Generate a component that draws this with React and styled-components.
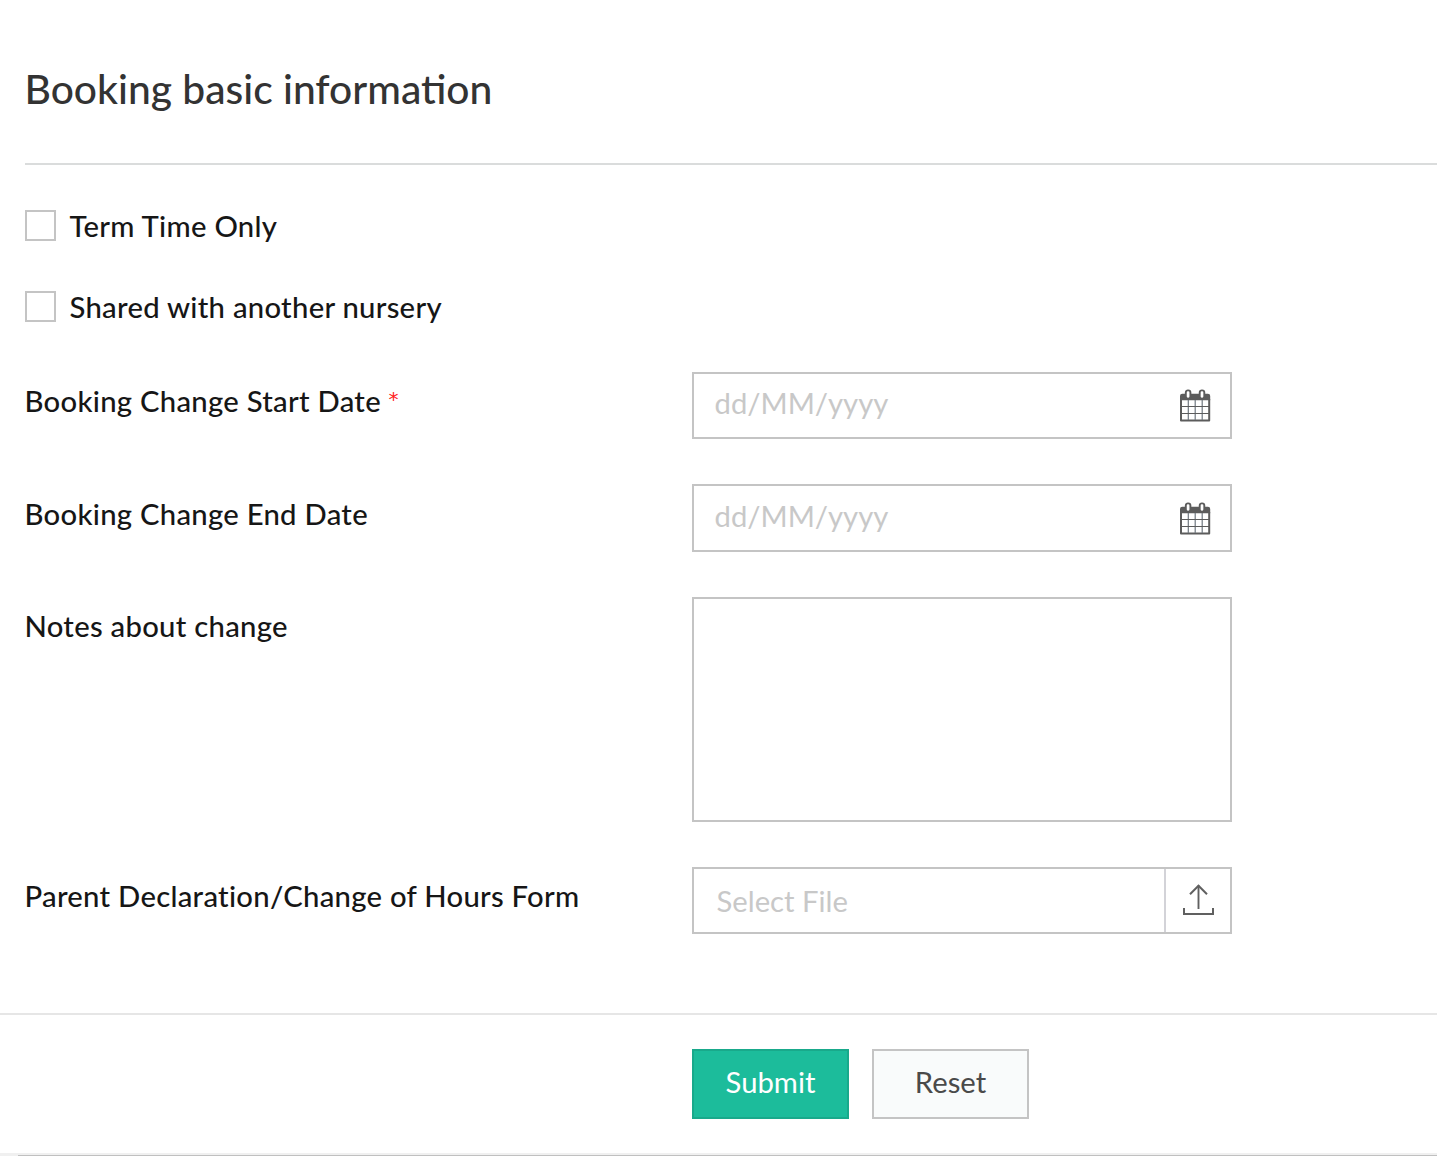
import React from "react";
import styled, { createGlobalStyle } from "styled-components";

const GlobalStyle = createGlobalStyle`
  * { box-sizing: border-box; }
  body {
    margin: 0;
    background: #fff;
    font-family: Lato, "Open Sans", sans-serif;
    overflow: hidden;
  }
`;

const Page = styled.main`
  height: 1156px;
  display: flex;
  flex-direction: column;
  overflow: hidden;
`;

const Header = styled.header`
  margin-left: 25px;
  height: 165px;
  padding-top: 64px;
  border-bottom: 2px solid #dadcdc;
`;

const Title = styled.h1`
  margin: 0 0 0 -0.5px;
  font-size: 40.75px;
  line-height: 50px;
  font-weight: 500;
  color: #333;
  white-space: nowrap;
`;

const Fields = styled.div`
  padding: 45px 0 0 25px;
  height: 848px;
`;

const CheckRow = styled.label`
  display: flex;
  align-items: flex-start;
  height: 31px;
  margin-bottom: 50px;
  gap: 14px;
`;

const CheckBox = styled.input`
  appearance: none;
  flex: none;
  width: 31px;
  height: 31px;
  margin: 0;
  border: 2px solid #c4c4c4;
  background: #fff;
`;

const LabelText = styled.span`
  margin-left: -0.5px;
  font-size: 29.25px;
  font-weight: 500;
  line-height: 32px;
  letter-spacing: 0.28px;
  color: #161616;
  white-space: nowrap;
`;

const Row = styled.div`
  display: grid;
  grid-template-columns: 667px 540px;
  align-items: start;
  height: ${(p) => p.$height}px;
  margin-bottom: ${(p) => p.$gap}px;
`;

const RowLabel = styled(LabelText)`
  padding-top: ${(p) => p.$top || 13}px;
`;

const Required = styled.span`
  font-family: "DejaVu Sans", sans-serif;
  font-weight: 400;
  font-size: 20px;
  line-height: 1;
  vertical-align: 6px;
  color: #f22;
`;

const Control = styled.div`
  display: flex;
  height: 100%;
  border: 2px solid #c4c4c4;
  background: #fff;
`;

const TextInput = styled.input`
  flex: 1;
  min-width: 0;
  height: 60px;
  border: 0;
  outline: 0;
  padding: 0 0 0 ${(p) => p.$indent}px;
  margin-top: ${(p) => p.$shift}px;
  background: transparent;
  font: 400 29.25px Lato, "Open Sans", sans-serif;
  &::placeholder { color: #c8c8c8; opacity: 1; }
`;

const IconSlot = styled.span`
  display: flex;
  flex: none;
  padding: ${(p) => p.$top}px 19px 0 0;
`;

const UploadSlot = styled.span`
  display: flex;
  flex: none;
  width: 66px;
  padding: 15px 0 0 16px;
  border-left: 2px solid #d3d3d8;
`;

const Notes = styled.textarea`
  width: 540px;
  height: 225px;
  border: 2px solid #c4c4c4;
  background: #fff;
  resize: none;
  outline: 0;
  font: 400 29.25px Lato, sans-serif;
`;

const Footer = styled.footer`
  display: flex;
  gap: 23px;
  height: 140px;
  padding: 34px 0 0 692px;
  border-top: 2px solid #e6e6e6;
`;

const Button = styled.button`
  width: 157px;
  height: 70px;
  padding: 0 0 5px;
  border: 2px solid ${(p) => (p.$primary ? "#19a98b" : "#c4c4c4")};
  background: ${(p) => (p.$primary ? "#1cbc9b" : "#f9fbfb")};
  color: ${(p) => (p.$primary ? "#fff" : "#4a4a4a")};
  font: 400 29.25px Lato, "Open Sans", sans-serif;
`;

const Edge = styled.div`
  height: 3px;
  padding: 2px 0 0 18px;
  background: #f0f0f0;
`;

const EdgeLine = styled.div`
  height: 1px;
  background: #c0c0c0;
`;

const CalendarIcon = () => (
  <svg width="32" height="34" viewBox="0 0 32 34" fill="none">
    <path d="M1 11.2V7Q1 4.8 3.3 4.8H28.9Q31.2 4.8 31.2 7V11.2Z" fill="#5c5c5c" />
    <path d="M2 10V31.5H30.2V10" stroke="#5c5c5c" strokeWidth="2" strokeLinejoin="round" />
    <path d="M9.3 11V31M16.2 11V31M23.2 11V31" stroke="#707880" strokeWidth="1.2" />
    <path d="M2 17.5H30M2 24.5H30" stroke="#5c5c5c" strokeWidth="1.2" />
    <rect x="6.8" y="1.4" width="4.6" height="8.2" rx="2.1" fill="#fff" stroke="#5c5c5c" strokeWidth="1.9" />
    <rect x="20.7" y="1.4" width="4.6" height="8.2" rx="2.1" fill="#fff" stroke="#5c5c5c" strokeWidth="1.9" />
  </svg>
);

const UploadIcon = () => (
  <svg width="32" height="32" viewBox="0 0 32 32" fill="none" stroke="#606060">
    <path d="M16.5 25V1.5" strokeWidth="1.9" />
    <path d="M8 10.2L16.5 1.7L25 10.2" strokeWidth="2" />
    <path d="M2 24V30H31V24" strokeWidth="2" />
  </svg>
);

const Check = ({ children }) => (
  <CheckRow>
    <CheckBox type="checkbox" />
    <LabelText>{children}</LabelText>
  </CheckRow>
);

const DateRow = ({ label, required, height, gap, labelTop, shift, iconTop }) => (
  <Row $height={height} $gap={gap}>
    <RowLabel $top={labelTop}>
      {label}
      {required && <> <Required>*</Required></>}
    </RowLabel>
    <Control>
      <TextInput placeholder="dd/MM/yyyy" $indent={20.5} $shift={shift} />
      <IconSlot $top={iconTop}><CalendarIcon /></IconSlot>
    </Control>
  </Row>
);

export default function App() {
  return (
    <>
      <GlobalStyle />
      <Page>
        <Header>
          <Title>Booking basic information</Title>
        </Header>
        <Fields>
          <Check>Term Time Only</Check>
          <Check>Shared with another nursery</Check>
          <DateRow label="Booking Change Start Date" required height={67} gap={45} labelTop={13} shift={-2} iconTop={15} />
          <DateRow label="Booking Change End Date" height={68} gap={45} labelTop={14} shift={-1} iconTop={16} />
          <Row $height={225} $gap={45}>
            <RowLabel>Notes about change</RowLabel>
            <Notes />
          </Row>
          <Row $height={67} $gap={0}>
            <RowLabel>Parent Declaration/Change of Hours Form</RowLabel>
            <Control>
              <TextInput placeholder="Select File" $indent={22.5} $shift={1} />
              <UploadSlot><UploadIcon /></UploadSlot>
            </Control>
          </Row>
        </Fields>
        <Footer>
          <Button $primary>Submit</Button>
          <Button>Reset</Button>
        </Footer>
        <Edge><EdgeLine /></Edge>
      </Page>
    </>
  );
}
